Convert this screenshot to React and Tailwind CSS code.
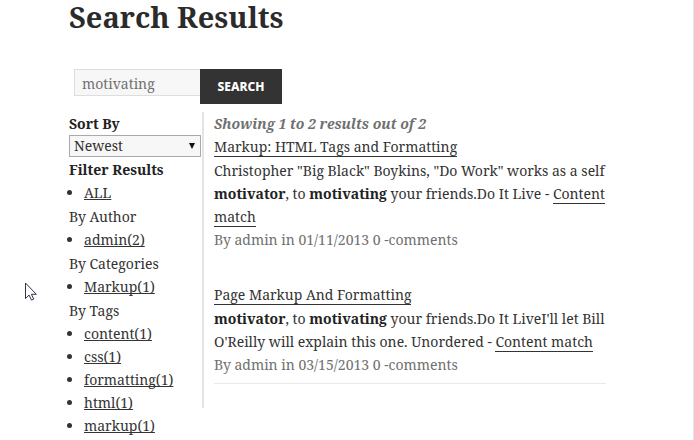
const filters = [
  { title: "Filter Results", strong: true, items: ["ALL"] },
  { title: "By Author", items: ["admin(2)"] },
  { title: "By Categories", items: ["Markup(1)"] },
  { title: "By Tags", items: ["content(1)", "css(1)", "formatting(1)", "html(1)", "markup(1)"] },
];

function ResultLink({ children }) {
  return (
    <a href="#" className="border-b border-[#333]">
      {children}
    </a>
  );
}

function SearchForm() {
  return (
    <form className="ml-[5px] mt-[36px] flex items-start" onSubmit={(e) => e.preventDefault()}>
      <input
        type="text"
        aria-label="Search"
        defaultValue="motivating"
        className="h-[27px] w-[126px] border border-r-0 border-[#dedede] bg-[#f7f7f7] pb-px pl-[7px] pt-[3px] text-[14px] text-[#707070] outline-none"
      />
      <button
        type="submit"
        className="h-[35px] w-[82px] bg-[#333] font-['Noto_Sans','Open_Sans',sans-serif] text-[12px] font-extrabold text-white"
      >
        SEARCH
      </button>
    </form>
  );
}

function Sidebar() {
  return (
    <aside className="w-[133px] shrink-0">
      <label htmlFor="sort" className="block font-bold text-[#222]">
        Sort By
      </label>
      <div className="relative h-[23px] w-[132px]">
        <select
          id="sort"
          className="block h-[22px] w-full appearance-none border border-[#a9a9a9] bg-[#f7f7f7] pl-[4px] leading-[20px] outline-none"
        >
          <option>Newest</option>
          <option>Oldest</option>
        </select>
        <svg viewBox="0 0 6 6" className="pointer-events-none absolute right-[6px] top-[8px] size-[6px]" fill="#111">
          <path d="M0 0h6L3 6z" />
        </svg>
      </div>
      <div className="space-y-px">
        {filters.map((group) => (
          <div key={group.title}>
            <h2 className={group.strong ? "font-bold text-[#222]" : ""}>{group.title}</h2>
            <ul className="list-disc pl-[15px]">
              {group.items.map((item) => (
                <li key={item}>
                  <a href="#" className="underline underline-offset-1 [text-decoration-skip-ink:none]">
                    {item}
                  </a>
                </li>
              ))}
            </ul>
          </div>
        ))}
      </div>
    </aside>
  );
}

function Results() {
  return (
    <section className="h-[296px] min-w-0 flex-1 border-l-2 border-[#e4e4e4] pl-[10px]">
      <p className="font-bold italic text-[#707070]">Showing 1 to 2 results out of 2</p>
      <article>
        <h2>
          <ResultLink>Markup: HTML Tags and Formatting</ResultLink>
        </h2>
        <p className="pt-px">
          Christopher "Big Black" Boykins, "Do Work" works as a self
          <br />
          <b className="text-[#222]">motivator</b>, to <b className="text-[#222]">motivating</b> your friends.Do It Live
          - <ResultLink>Content<br />match</ResultLink>
        </p>
        <p className="text-[#707070]">By admin in 01/11/2013 0 -comments</p>
      </article>
      <article className="mt-8 border-b border-[#eaeaea] pb-[7px]">
        <h2>
          <ResultLink>Page Markup And Formatting</ResultLink>
        </h2>
        <p className="pt-px">
          <b className="text-[#222]">motivator</b>, to <b className="text-[#222]">motivating</b> your friends.Do It
          LiveI'll let Bill
          <br />
          O'Reilly will explain this one. Unordered - <ResultLink>Content match</ResultLink>
        </p>
        <p className="text-[#707070]">By admin in 03/15/2013 0 -comments</p>
      </article>
    </section>
  );
}

export default function App() {
  return (
    <div className="relative min-h-screen border-r border-[#e2e2e2] bg-white font-['Noto_Serif','DejaVu_Serif',serif] text-[14px] leading-[23px] text-[#333]">
      <main className="pl-[69px] pr-[87px]">
        <h1 className="text-[29px] font-bold leading-[33px] text-[#2b2b2b]">Search Results</h1>
        <SearchForm />
        <div className="mt-2 flex">
          <Sidebar />
          <Results />
        </div>
      </main>
      <svg
        viewBox="0 0 12 19"
        className="absolute left-[25px] top-[282px] h-[19px] w-[12px]"
        fill="white"
        stroke="#333348"
        strokeWidth="1"
        aria-hidden="true"
      >
        <path d="M.5 1v15.5l3.6-3.4 2.4 5 2.2-1-2.3-4.8h4.9z" />
      </svg>
    </div>
  );
}
